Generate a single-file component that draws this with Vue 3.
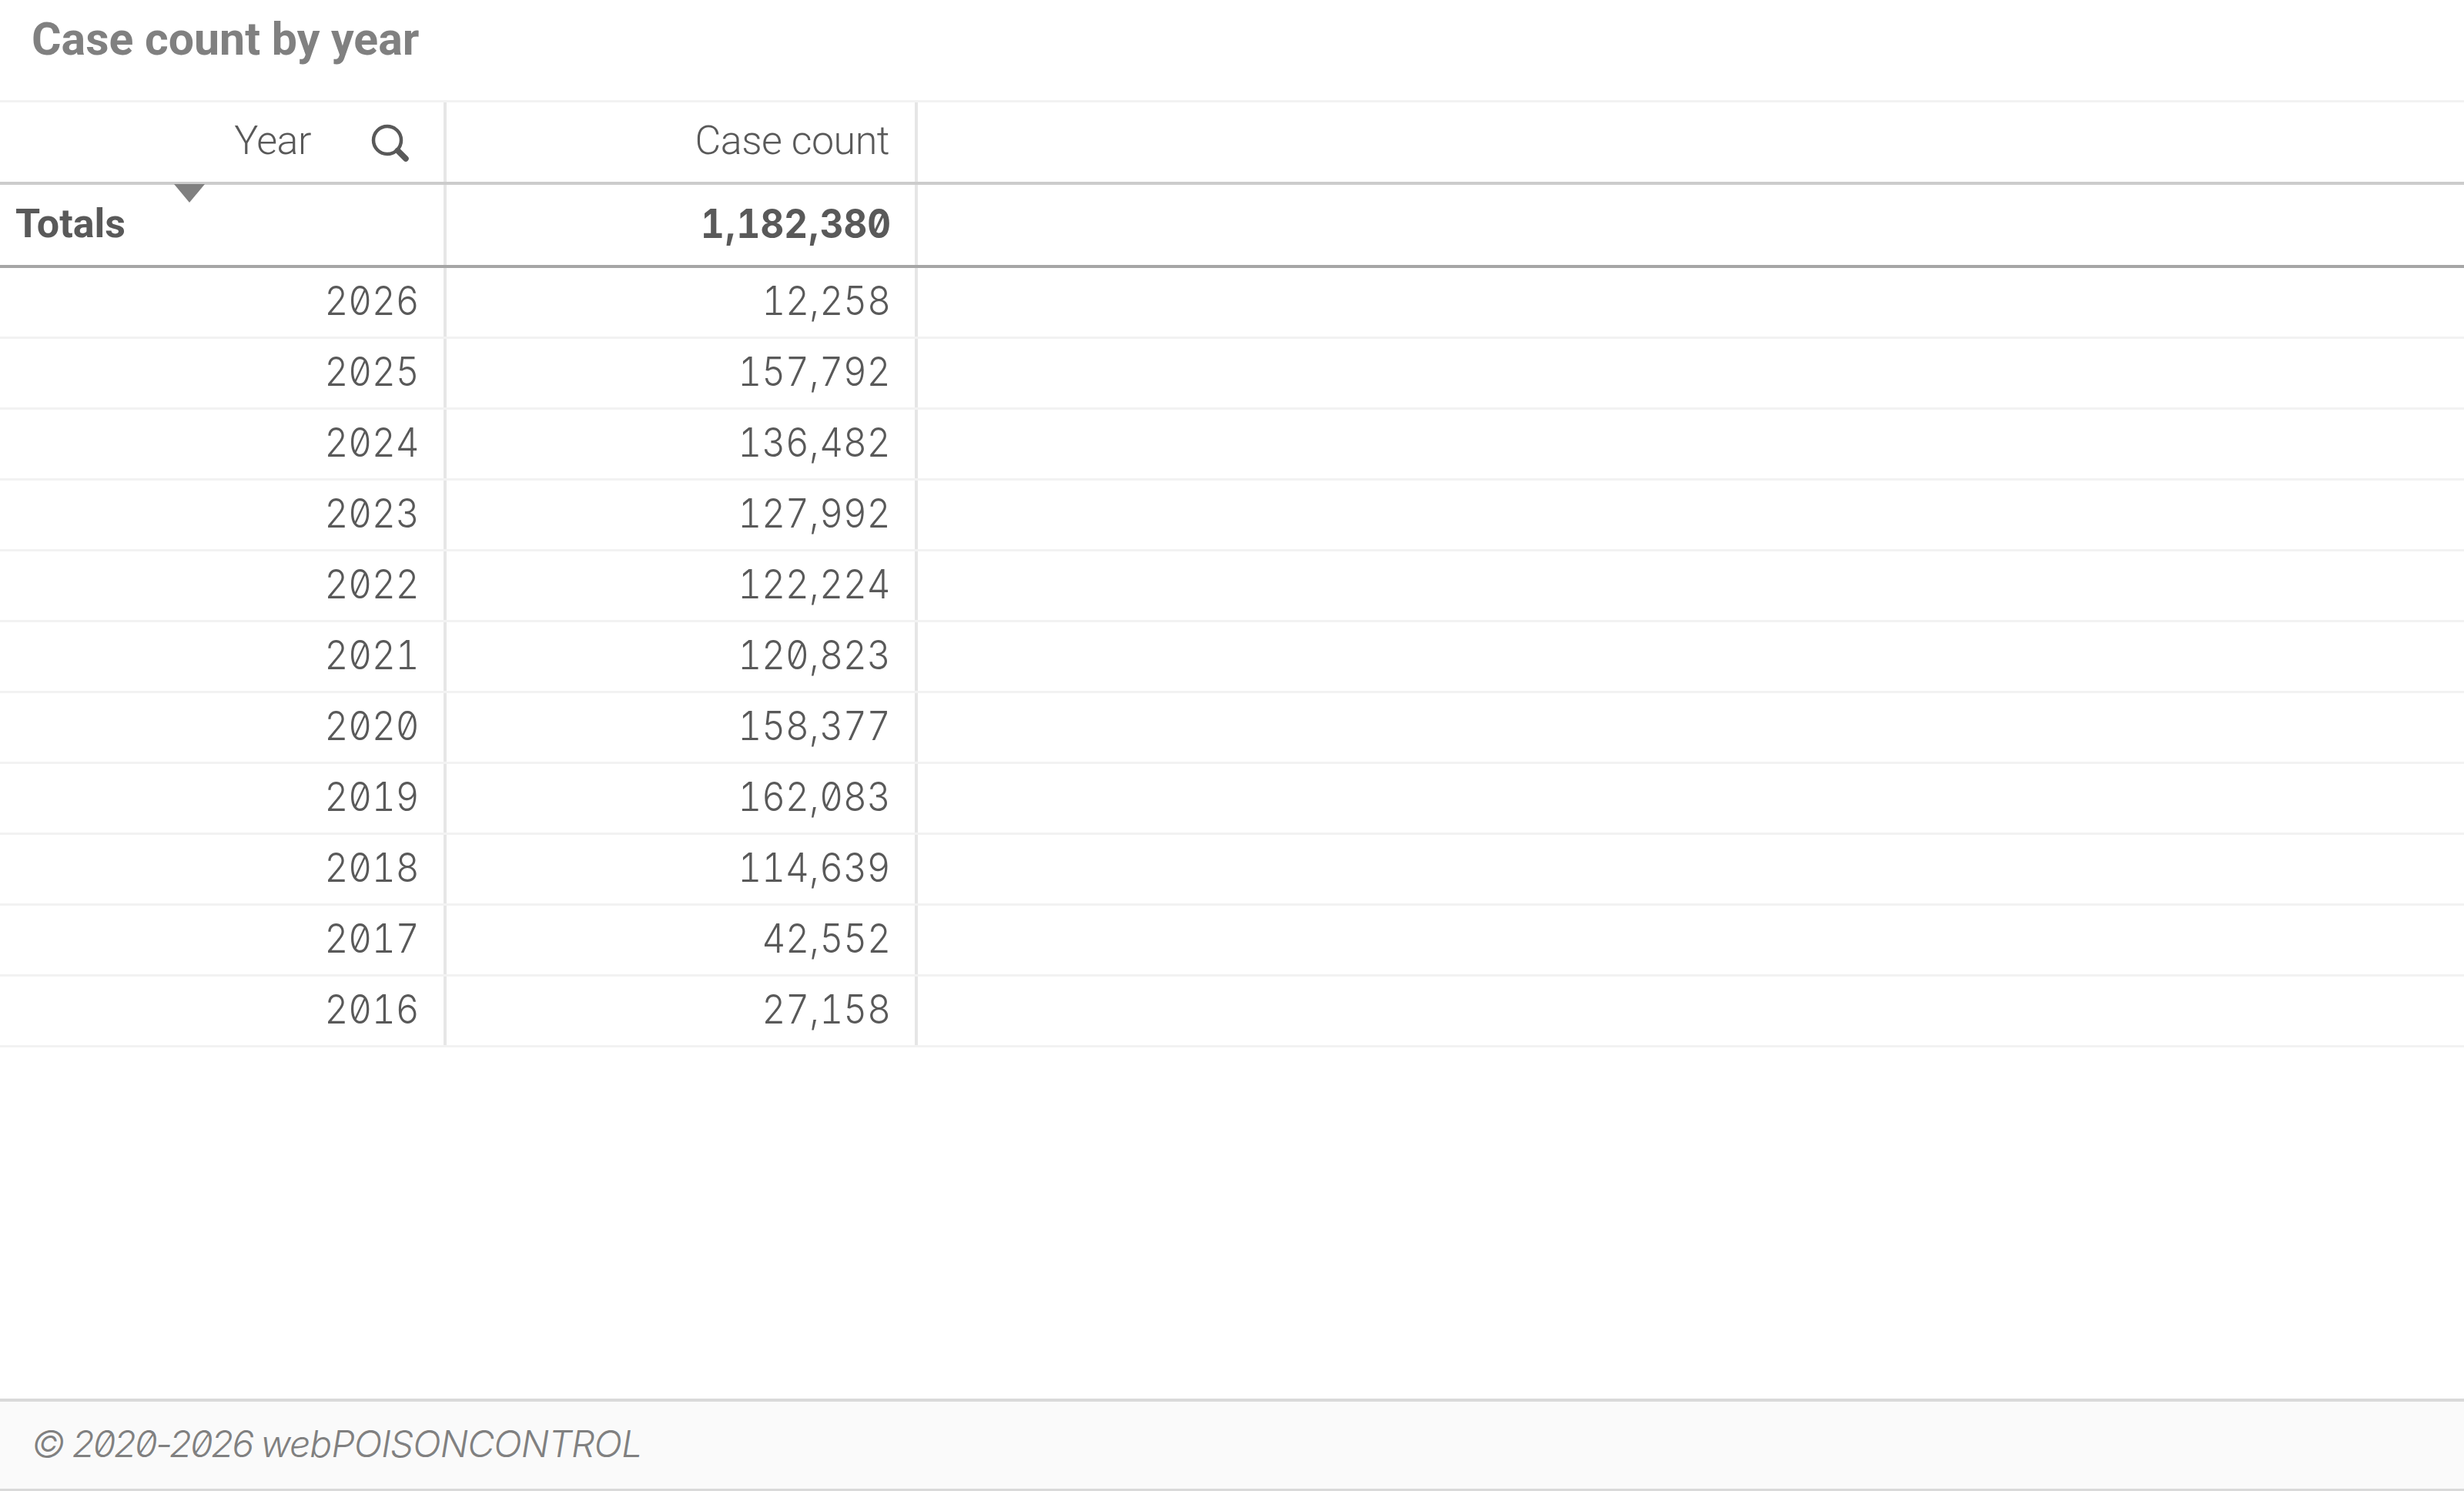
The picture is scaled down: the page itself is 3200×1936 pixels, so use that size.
<script setup>
const rows = [
  ['2026', '12,258'], ['2025', '157,792'], ['2024', '136,482'], ['2023', '127,992'],
  ['2022', '122,224'], ['2021', '120,823'], ['2020', '158,377'], ['2019', '162,083'],
  ['2018', '114,639'], ['2017', '42,552'], ['2016', '27,158'],
]
const groups = (s) => s.split(',')
</script>

<template>
  <div class="page">
    <h1 class="title">Case count by year</h1>
    <div class="table">
      <div class="row head">
        <div class="cell year-head">
          <span class="label">Year</span>
          <svg class="search" viewBox="0 0 50 50" width="50" height="50" aria-hidden="true">
            <circle cx="21" cy="21" r="18" fill="none" stroke="#595959" stroke-width="4.5" />
            <path d="M34.5 34.5 L45 45" stroke="#595959" stroke-width="7.5" stroke-linecap="round" />
          </svg>
        </div>
        <div class="cell"><span class="label">Case count</span></div>
        <div class="fill"></div>
        <span class="sort"></span>
      </div>
      <div class="row totals">
        <div class="cell total-label">Totals</div>
        <div class="cell num-cell">
          <span class="num">
            <template v-for="(g, i) in groups('1,182,380')" :key="i"><span v-if="i" class="comma">,</span>{{ g }}</template>
          </span>
        </div>
        <div class="fill"></div>
      </div>
      <div v-for="r in rows" :key="r[0]" class="row body">
        <div class="cell num-cell"><span class="num">{{ r[0] }}</span></div>
        <div class="cell num-cell">
          <span class="num">
            <template v-for="(g, i) in groups(r[1])" :key="i"><span v-if="i" class="comma">,</span>{{ g }}</template>
          </span>
        </div>
        <div class="fill"></div>
      </div>
    </div>
    <div class="spacer"></div>
    <footer class="foot"><span class="foot-digits">© 2020-2026 </span><span class="foot-name">webPOISONCONTROL</span></footer>
  </div>
</template>

<style>
html, body { margin: 0; background: #fff; }
</style>

<style scoped>
.page {
  width: 3200px;
  height: 1936px;
  display: flex;
  flex-direction: column;
  font-family: "Roboto", "Liberation Sans", sans-serif;
  color: #595959;
  overflow: hidden;
  background: #fff;
}
.title {
  margin: 0;
  height: 130px;
  box-sizing: border-box;
  padding: 17px 0 0 41px;
  font-size: 59px;
  line-height: 68px;
  font-weight: 700;
  color: #808080;
}
.table { border-top: 3px solid #f2f2f2; }
.row {
  position: relative;
  display: grid;
  grid-template-columns: 580px 612px 1fr;
  box-sizing: border-box;
}
.cell {
  border-right: 4px solid #e6e6e6;
  box-sizing: border-box;
  display: flex;
  align-items: center;
  justify-content: flex-end;
  padding: 0 33px 4px 0;
}
.num-cell { padding-right: 31px; }
.head { height: 107px; border-bottom: 4px solid #ccc; font-size: 52px; font-weight: 350; letter-spacing: -0.5px; }
.totals { height: 108px; border-bottom: 4px solid #a6a6a6; font-size: 52px; font-weight: 700; }
.body { height: 92px; border-bottom: 3px solid #f2f2f2; font-size: 52px; font-weight: 350; }
.year-head { padding-right: 44px; gap: 78px; }
.search { flex: none; margin-top: 6px; }
.sort {
  position: absolute;
  left: 226px;
  top: 106px;
  width: 0;
  height: 0;
  border-left: 20px solid transparent;
  border-right: 20px solid transparent;
  border-top: 24px solid #808080;
}
.total-label { justify-content: flex-start; padding-left: 20px; padding-right: 0; }
.num {
  display: inline-block;
  white-space: nowrap;
  font-family: "Inter", "Liberation Sans", sans-serif;
  font-feature-settings: "zero" 1, "tnum" 1;
  transform: scaleX(0.915);
  transform-origin: right center;
}
.comma { font-feature-settings: "tnum" 0; }
.spacer { flex: 1; }
.foot {
  height: 120px;
  box-sizing: border-box;
  border-top: 4px solid #d9d9d9;
  border-bottom: 3px solid #d9d9d9;
  background: #fafafa;
  padding: 0 0 4px 41px;
  display: flex;
  align-items: center;
  white-space: pre;
  font-size: 48px;
  font-style: italic;
  font-weight: 350;
  color: #808080;
  font-family: "Inter", "Liberation Sans", sans-serif;
  font-feature-settings: "zero" 1;
}
.foot-digits { letter-spacing: -2.4px; }
.foot-name { letter-spacing: -0.9px; }
</style>
